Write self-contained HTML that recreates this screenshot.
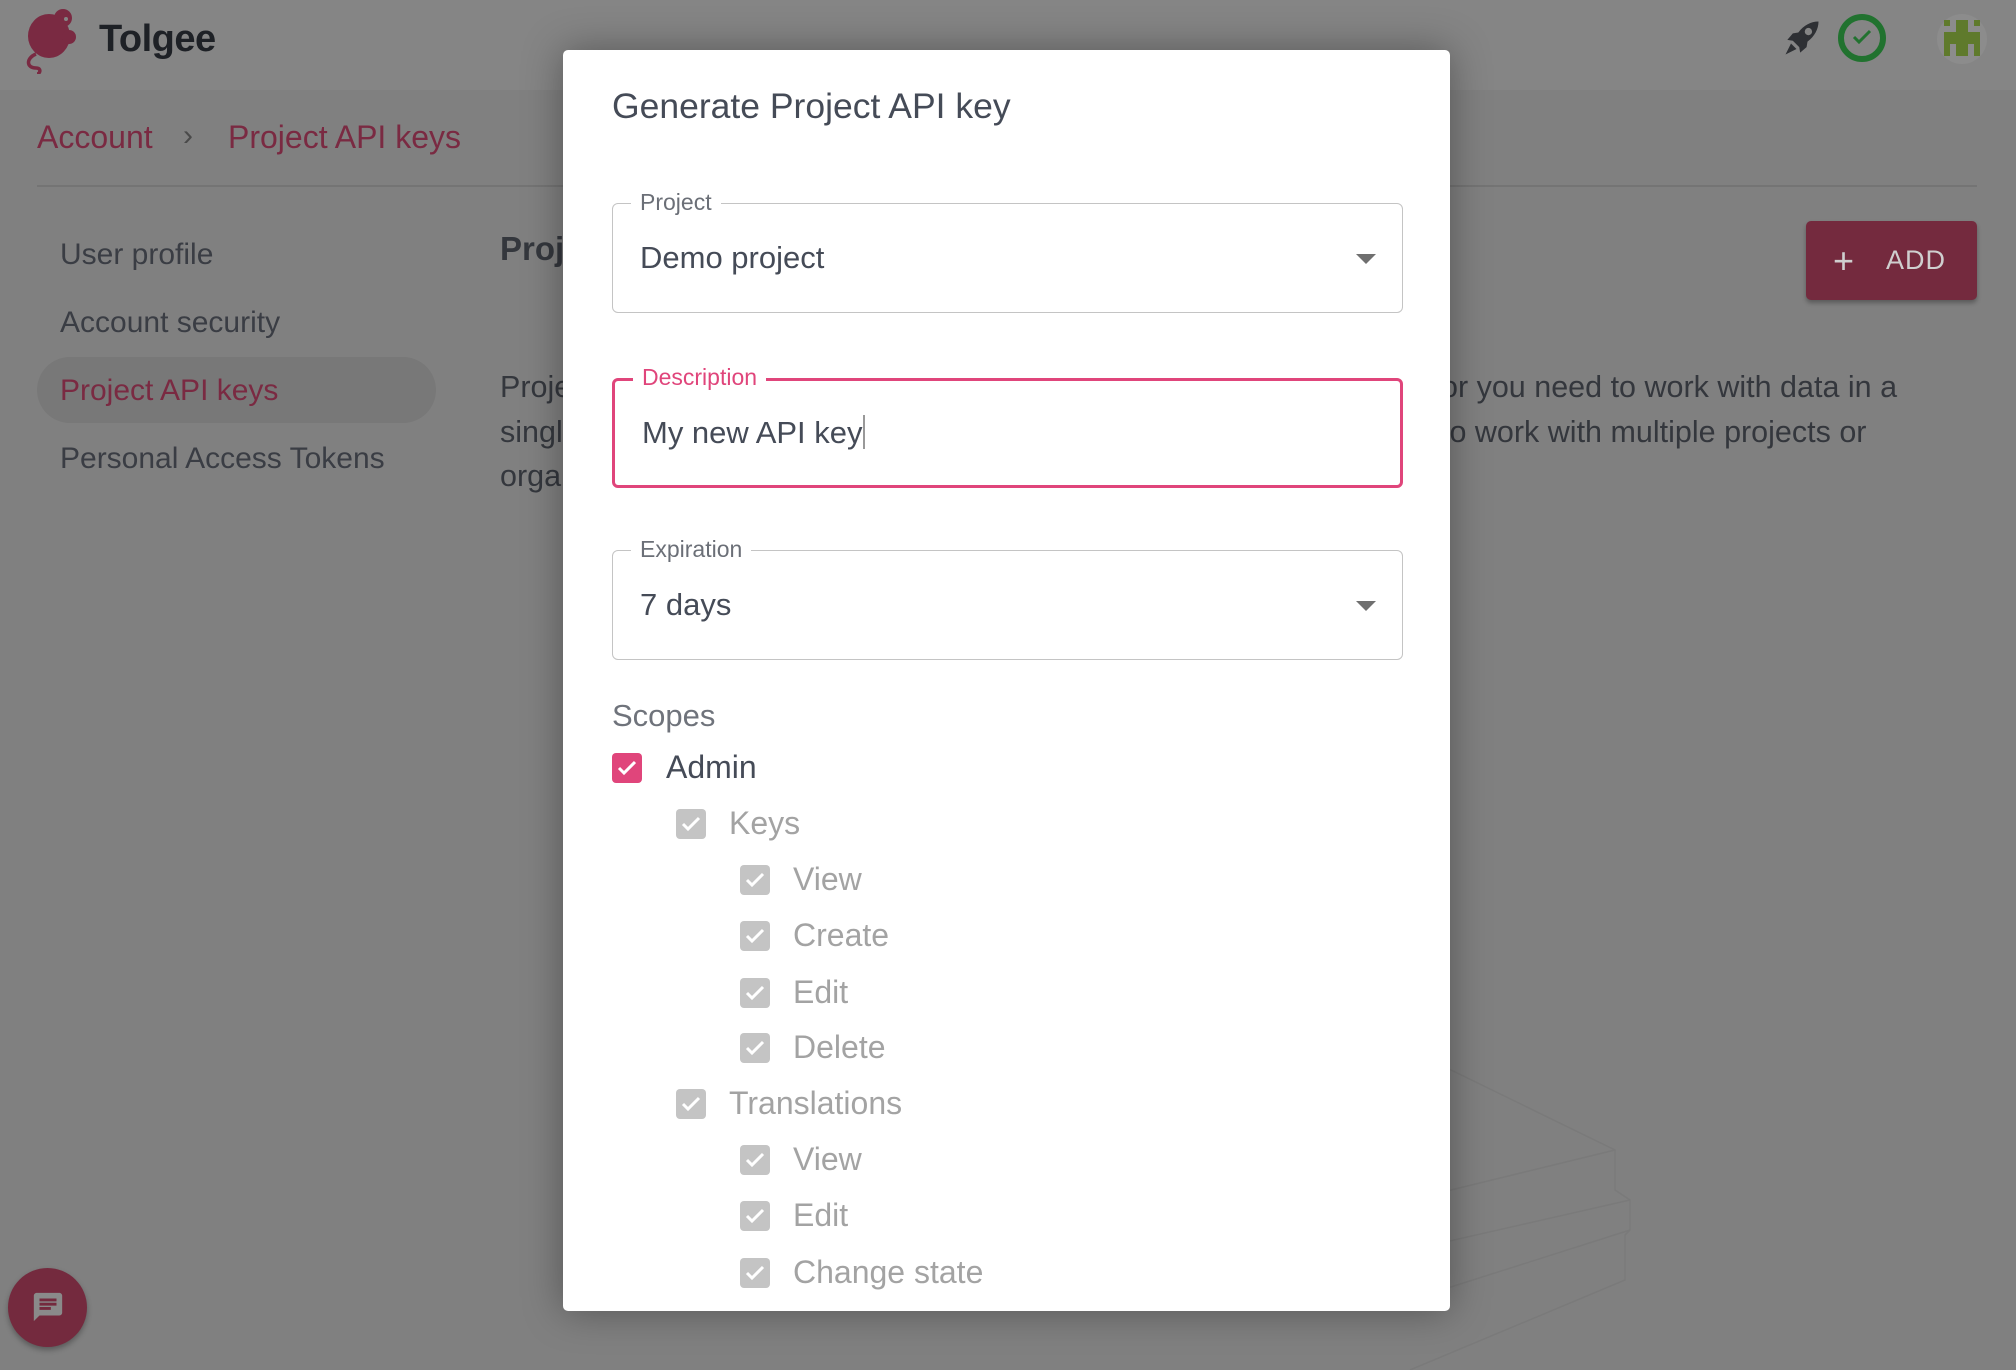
<!DOCTYPE html>
<html><head><meta charset="utf-8">
<style>
*{box-sizing:border-box;margin:0;padding:0}
body{width:2016px;height:1368px;overflow:hidden;background:#808080;font-family:"Liberation Sans",sans-serif;position:relative}
.abs{position:absolute;white-space:nowrap}
.header{position:absolute;left:0;top:0;width:2016px;height:90px;background:#858585}
.side{font-size:30px;color:#3a3d44}
.txt{font-size:30.5px;color:#34373d}
.modal{position:absolute;left:563px;top:50px;width:887px;height:1261px;background:#fff;border-radius:5px;box-shadow:0 0 40px rgba(0,0,0,.35)}
.field{position:absolute;left:49px;width:791px;height:110px;border:1.5px solid #c4c4c4;border-radius:6px}
.field .lab{position:absolute;left:18px;top:-15px;background:#fff;padding:0 9px;font-size:23px;color:#6b6f77}
.field .val{position:absolute;left:27px;top:36px;font-size:31px;color:#454b57}
.arrow{position:absolute;right:26px;top:50px;width:0;height:0;border-left:10px solid transparent;border-right:10px solid transparent;border-top:10px solid #6f6f6f}
.cb{position:absolute;width:30px;height:30px;border-radius:4px;background:#c4c4c4}
.cb svg{position:absolute;left:4px;top:4px}
.cl{position:absolute;font-size:32px;color:#a3a3a3;white-space:nowrap}
</style></head><body>
<div class="header"></div>
<svg class="abs" style="left:22px;top:4px" width="56" height="70" viewBox="0 0 56 70">
<ellipse cx="27" cy="32" rx="21" ry="22" fill="#7a2a42"/>
<circle cx="41" cy="14" r="9" fill="#7a2a42"/><circle cx="47" cy="33" r="7" fill="#7a2a42"/>
<circle cx="44" cy="15" r="2" fill="#858585"/>
<path d="M14 50 C4 54 4 64 14 64 C20 64 18 70 15 70" stroke="#7a2a42" stroke-width="3.5" fill="none"/>
</svg>
<div class="abs" style="left:99px;top:18px;font-size:38px;font-weight:bold;color:#1e2126;letter-spacing:-0.5px">Tolgee</div>
<svg class="abs" style="left:1780px;top:16px" width="44" height="44" viewBox="0 0 24 24"><path fill="#2e3034" d="M21 3c-4 0-8 2-11 6L7 9.5 4 13l3 .5 3.5 3.5.5 3 3.5-3 .5-3c4-3 6-7 6-11zM15.5 6.5a2 2 0 110 4 2 2 0 010-4zM6 15l-3 6 6-3z"/></svg>
<div class="abs" style="left:1838px;top:14px;width:48px;height:48px;border:6px solid #21722f;border-radius:50%"></div>
<svg class="abs" style="left:1852px;top:29px" width="20" height="16" viewBox="0 0 20 16"><path d="M2 8l5 5L18 2" stroke="#21722f" stroke-width="3" fill="none"/></svg>
<div class="abs" style="left:1937px;top:14px;width:50px;height:50px;border-radius:50%;background:#8c8c8c"></div>
<svg class="abs" style="left:1944px;top:20px" width="36" height="36" viewBox="0 0 6 6"><path fill="#5f7a2c" d="M0 0h1v1H0zM5 0h1v1H5zM2 0h2v2H2zM0 2h6v2H0zM0 4h1v2H0zM5 4h1v2H5zM2 4h2v2H2z"/></svg>
<div class="abs" style="left:37px;top:119px;font-size:32px;color:#7a2a42">Account</div>
<div class="abs" style="left:183px;top:119px;font-size:30px;color:#4a4a4a">›</div>
<div class="abs" style="left:228px;top:119px;font-size:32px;color:#7a2a42">Project API keys</div>
<div class="abs" style="left:37px;top:185px;width:1940px;height:2px;background:#747474"></div>
<div class="abs" style="left:37px;top:357px;width:399px;height:66px;border-radius:33px;background:#787878"></div>
<div class="abs side" style="left:60px;top:238px">User profile</div>
<div class="abs side" style="left:60px;top:306px">Account security</div>
<div class="abs side" style="left:60px;top:374px;color:#7a2a42">Project API keys</div>
<div class="abs side" style="left:60px;top:442px">Personal Access Tokens</div>
<div class="abs" style="left:500px;top:230px;font-size:33px;font-weight:bold;color:#34373d">Project API keys</div>
<div class="abs txt" style="left:500px;top:370px">Project</div>
<div class="abs txt" style="left:500px;top:415px">single</div>
<div class="abs txt" style="left:500px;top:459px">organization</div>
<div class="abs txt" style="left:1441px;top:370px">or you need to work with data in a</div>
<div class="abs txt" style="left:1441px;top:415px">to work with multiple projects or</div>
<div class="abs" style="left:1806px;top:221px;width:171px;height:79px;background:#742a3e;border-radius:5px;box-shadow:0 3px 5px rgba(0,0,0,.3)"></div>
<div class="abs" style="left:1833px;top:240px;font-size:36px;color:#cfcfcf">+</div>
<div class="abs" style="left:1886px;top:245px;font-size:27px;color:#cfcfcf;letter-spacing:1px">ADD</div>
<svg class="abs" style="left:1300px;top:1040px" width="360" height="330" viewBox="0 0 360 330" fill="none" stroke="#7a7a7a" stroke-width="1.5"><path d="M110 10 L315 110 L315 150 L330 160 L330 190 L325 195 L325 240 L110 330"/><path d="M110 160 L315 110 M110 210 L330 160 M110 260 L330 190"/></svg>
<div class="abs" style="left:8px;top:1268px;width:79px;height:79px;border-radius:50%;background:#742a3e;box-shadow:0 3px 6px rgba(0,0,0,.3)"></div>
<svg class="abs" style="left:31px;top:1290px" width="34" height="34" viewBox="0 0 24 24"><path fill="#8a8a8a" d="M20 2H4c-1.1 0-2 .9-2 2v18l4-4h14c1.1 0 2-.9 2-2V4c0-1.1-.9-2-2-2zM6 9h12v2H6zm8 5H6v-2h8zm4-6H6V6h12z"/></svg>

<div class="modal">
<div class="abs" style="left:49px;top:36px;font-size:35.5px;color:#454b57">Generate Project API key</div>
<div class="field" style="top:153px"><div class="lab">Project</div><div class="val">Demo project</div><div class="arrow"></div></div>
<div class="field" style="top:328px;border:3px solid #e0457b"><div class="lab" style="color:#e0457b;top:-17px">Description</div><div class="val" style="top:34px">My new API key<span style="display:inline-block;width:2px;height:34px;background:#999;vertical-align:-6px"></span></div></div>
<div class="field" style="top:500px"><div class="lab">Expiration</div><div class="val">7 days</div><div class="arrow"></div></div>
<div class="abs" style="left:49px;top:648px;font-size:31px;color:#6f737b">Scopes</div>
<div class="cb" style="left:49px;top:703px;background:#e0457b"><svg width="22" height="22" viewBox="0 0 22 22"><path d="M3 11l5 5L19 5" stroke="#fff" stroke-width="3" fill="none"/></svg></div>
<div class="cl" style="left:103px;top:699px;color:#454b57">Admin</div>
<div class="cb" style="left:113px;top:759px"><svg width="22" height="22" viewBox="0 0 22 22"><path d="M3 11l5 5L19 5" stroke="#fff" stroke-width="3" fill="none"/></svg></div>
<div class="cl" style="left:166px;top:755px">Keys</div>
<div class="cb" style="left:177px;top:815px"><svg width="22" height="22" viewBox="0 0 22 22"><path d="M3 11l5 5L19 5" stroke="#fff" stroke-width="3" fill="none"/></svg></div>
<div class="cl" style="left:230px;top:811px">View</div>
<div class="cb" style="left:177px;top:871px"><svg width="22" height="22" viewBox="0 0 22 22"><path d="M3 11l5 5L19 5" stroke="#fff" stroke-width="3" fill="none"/></svg></div>
<div class="cl" style="left:230px;top:867px">Create</div>
<div class="cb" style="left:177px;top:928px"><svg width="22" height="22" viewBox="0 0 22 22"><path d="M3 11l5 5L19 5" stroke="#fff" stroke-width="3" fill="none"/></svg></div>
<div class="cl" style="left:230px;top:924px">Edit</div>
<div class="cb" style="left:177px;top:983px"><svg width="22" height="22" viewBox="0 0 22 22"><path d="M3 11l5 5L19 5" stroke="#fff" stroke-width="3" fill="none"/></svg></div>
<div class="cl" style="left:230px;top:979px">Delete</div>
<div class="cb" style="left:113px;top:1039px"><svg width="22" height="22" viewBox="0 0 22 22"><path d="M3 11l5 5L19 5" stroke="#fff" stroke-width="3" fill="none"/></svg></div>
<div class="cl" style="left:166px;top:1035px">Translations</div>
<div class="cb" style="left:177px;top:1095px"><svg width="22" height="22" viewBox="0 0 22 22"><path d="M3 11l5 5L19 5" stroke="#fff" stroke-width="3" fill="none"/></svg></div>
<div class="cl" style="left:230px;top:1091px">View</div>
<div class="cb" style="left:177px;top:1151px"><svg width="22" height="22" viewBox="0 0 22 22"><path d="M3 11l5 5L19 5" stroke="#fff" stroke-width="3" fill="none"/></svg></div>
<div class="cl" style="left:230px;top:1147px">Edit</div>
<div class="cb" style="left:177px;top:1208px"><svg width="22" height="22" viewBox="0 0 22 22"><path d="M3 11l5 5L19 5" stroke="#fff" stroke-width="3" fill="none"/></svg></div>
<div class="cl" style="left:230px;top:1204px">Change state</div>
</div>
</body></html>
